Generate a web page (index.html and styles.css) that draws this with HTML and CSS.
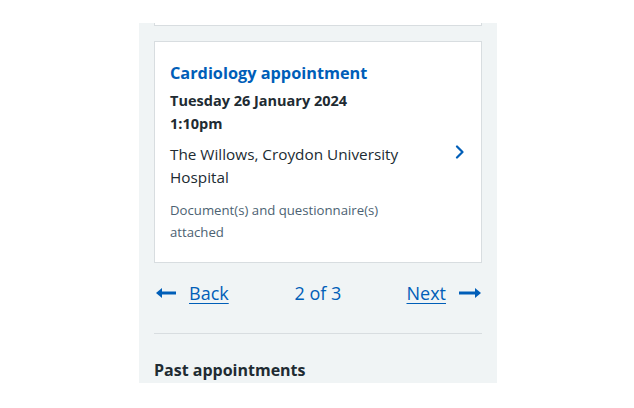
FILE: index.html
```html
<!DOCTYPE html>
<html lang="en">
<head>
<meta charset="utf-8">
<link rel="stylesheet" href="styles.css">
</head>
<body>
<main class="panel">
  <div class="prev-card"></div>
  <a class="card" href="#">
    <div class="card-body">
      <h2 class="card-title">Cardiology appointment</h2>
      <p class="card-date">Tuesday 26 January 2024<br>1:10pm</p>
      <p class="card-place">The Willows, Croydon University Hospital</p>
      <p class="card-note">Document(s) and questionnaire(s) attached</p>
    </div>
    <svg class="chevron" width="10" height="14" viewBox="0 0 10 14" aria-hidden="true">
      <path d="M2 1.5 L7.5 7 L2 12.5" fill="none" stroke="#005eb8" stroke-width="2.2" stroke-linecap="round" stroke-linejoin="round"/>
    </svg>
  </a>
  <nav class="pager">
    <a class="pager-back" href="#">
      <svg width="22" height="14" viewBox="0 0 22 14" aria-hidden="true">
        <path d="M21 7 H4" stroke="#005eb8" stroke-width="3" fill="none"/>
        <path d="M1 7 L7 2 V12 Z" fill="#005eb8"/>
      </svg>
      <span class="pager-link">Back</span>
    </a>
    <span class="pager-count">2 of 3</span>
    <a class="pager-next" href="#">
      <span class="pager-link">Next</span>
      <svg width="24" height="14" viewBox="0 0 24 14" aria-hidden="true">
        <path d="M1 7 H19" stroke="#005eb8" stroke-width="3" fill="none"/>
        <path d="M23 7 L17 2 V12 Z" fill="#005eb8"/>
      </svg>
    </a>
  </nav>
  <hr class="divider">
  <h3 class="section-title">Past appointments</h3>
</main>
</body>
</html>
```
FILE: styles.css
```css
html, body {
  margin: 0;
  padding: 0;
  background: #ffffff;
}
body {
  font-family: "Open Sans", "Noto Sans", Arial, sans-serif;
  color: #212b32;
}
.panel {
  margin: 23px 0 0 139px;
  width: 358px;
  height: 360px;
  box-sizing: border-box;
  padding: 0 15px;
  background: #f0f4f5;
  overflow: hidden;
}
.prev-card {
  height: 2px;
  background: #ffffff;
  border: 1px solid #d8dde0;
  border-top: 0;
}
.card {
  display: flex;
  align-items: center;
  margin-top: 15px;
  height: 222px;
  box-sizing: border-box;
  padding: 0 16px 0 15px;
  background: #ffffff;
  border: 1px solid #d8dde0;
  text-decoration: none;
  color: #212b32;
}
.card-body {
  flex: 1;
  padding-top: 1px;
}
.card-title {
  margin: 0 0 4px;
  font-size: 16.3px;
  line-height: 23px;
  font-weight: 700;
  color: #005eb8;
}
.card-date {
  margin: 0;
  font-size: 14.5px;
  line-height: 23px;
  font-weight: 700;
}
.card-place {
  margin: 8px 0 0;
  width: 250px;
  font-size: 15.3px;
  line-height: 23px;
}
.card-note {
  margin: 10px 0 0;
  width: 240px;
  font-size: 13.2px;
  line-height: 22px;
  color: #4c6272;
}
.chevron {
  flex: none;
}
.pager {
  display: grid;
  grid-template-columns: 1fr auto 1fr;
  align-items: center;
  height: 60px;
  margin-top: 0;
  font-size: 18px;
  color: #005eb8;
}
.pager a {
  display: flex;
  align-items: center;
  gap: 12px;
  color: #005eb8;
  text-decoration: none;
}
.pager-back {
  justify-self: start;
  padding-left: 1px;
}
.pager-next {
  justify-self: end;
}
.pager-link {
  text-decoration: underline;
  text-underline-offset: 3px;
}
.pager-count {
  text-align: center;
}
.divider {
  margin: 10px 0 0;
  border: 0;
  border-top: 1px solid #d8dde0;
  height: 0;
}
.section-title {
  margin: 25px 0 0;
  font-size: 16px;
  line-height: 22px;
  font-weight: 700;
}
```
